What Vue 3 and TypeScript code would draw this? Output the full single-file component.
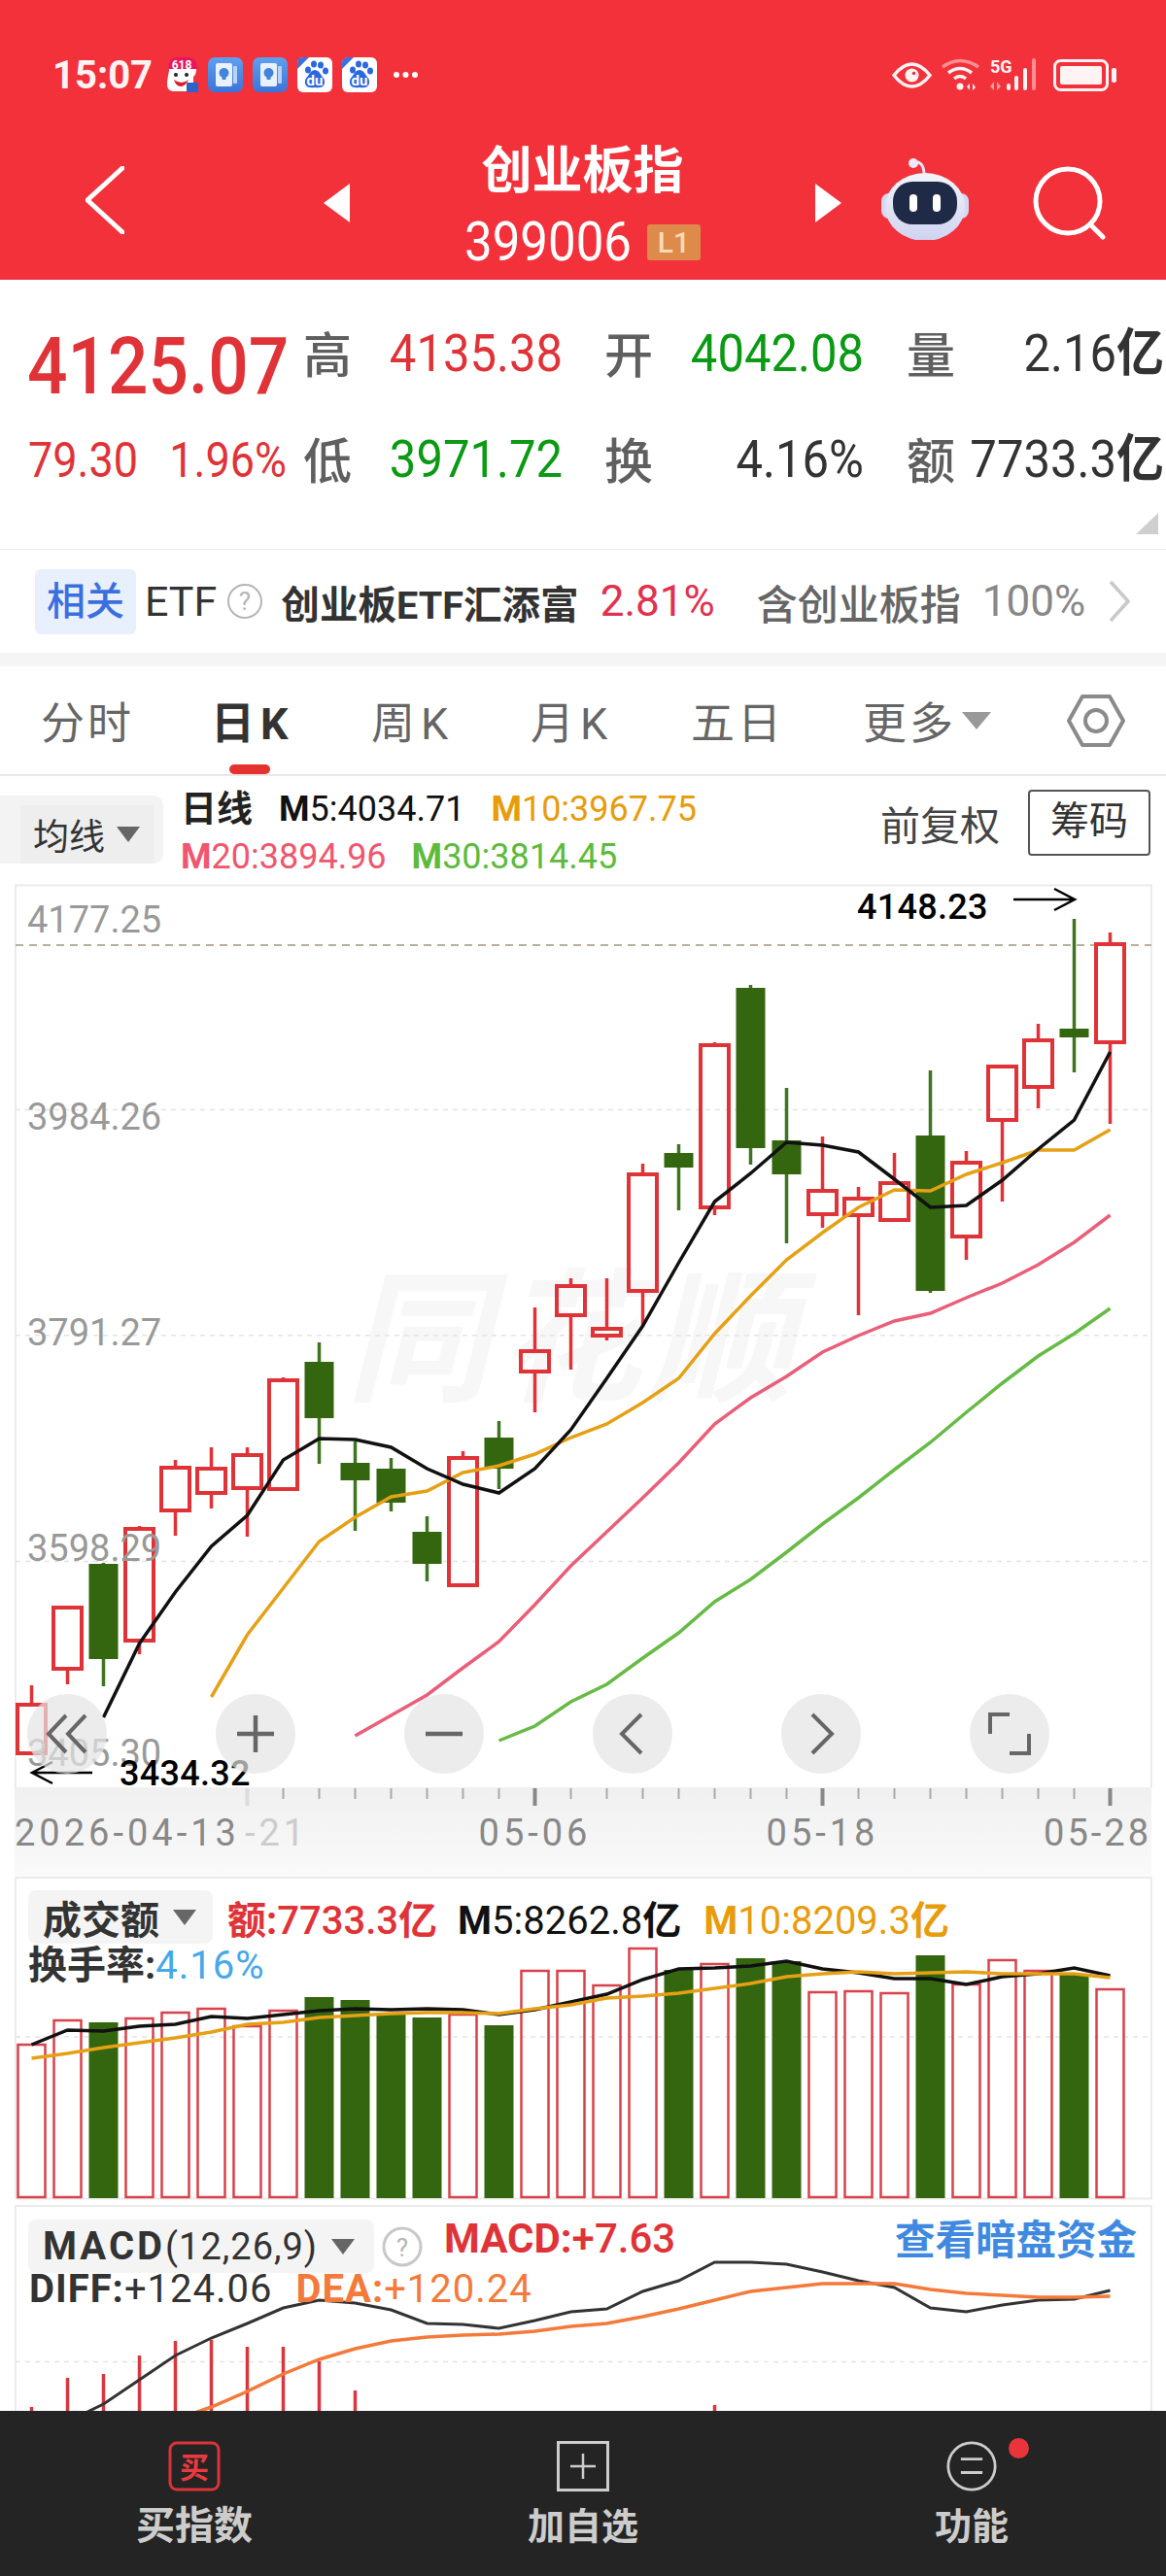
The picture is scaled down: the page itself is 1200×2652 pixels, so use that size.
<script setup lang="ts">
interface Candle {
  up: boolean
  top: number
  bot: number
  hi: number
  lo: number
}

const colX = (i: number): number => 32.5 + 37 * i

// [body top, body bottom, wick high, wick low, 1 = red]
const raw: number[][] = [
  [1754, 1804, 1734, 1804, 1], [1654, 1717, 1654, 1733, 1], [1609, 1707, 1608, 1735, 0],
  [1573, 1688, 1570, 1702, 1], [1510, 1554, 1502, 1580, 1], [1511, 1536, 1489, 1552, 1],
  [1497, 1531, 1489, 1581, 1], [1420, 1532, 1417, 1532, 1], [1401, 1459, 1381, 1506, 0],
  [1505, 1523, 1483, 1575, 0], [1511, 1546, 1500, 1555, 0], [1576, 1609, 1560, 1627, 0],
  [1500, 1631, 1493, 1631, 1], [1479, 1511, 1462, 1532, 0], [1390, 1411, 1345, 1453, 1],
  [1323, 1353, 1315, 1409, 1], [1367, 1374, 1315, 1379, 1], [1208, 1328, 1197, 1365, 1],
  [1186, 1201, 1177, 1245, 0], [1075, 1242, 1072, 1250, 1], [1016, 1181, 1013, 1198, 0],
  [1173, 1208, 1119, 1279, 0], [1225, 1249, 1169, 1263, 1], [1233, 1250, 1221, 1353, 1],
  [1217, 1255, 1186, 1257, 1], [1168, 1328, 1101, 1330, 0], [1196, 1272, 1184, 1296, 1],
  [1097, 1152, 1097, 1236, 1], [1070, 1118, 1053, 1140, 1], [1058, 1067, 945, 1103, 0],
  [971, 1072, 959, 1156, 1],
]

const candles: Candle[] = raw.map(r => ({ top: r[0], bot: r[1], hi: r[2], lo: r[3], up: r[4] === 1 }))

const pts = (start: number, ys: number[]): string =>
  ys.map((y, i) => `${colX(start + i)},${y}`).join(' ')

const ma5 = pts(2, [1767, 1691, 1638, 1591, 1559, 1502, 1480, 1481, 1489, 1511, 1527, 1536, 1511, 1471, 1418, 1364, 1299, 1236, 1207, 1175, 1178, 1185, 1213, 1242, 1240, 1214, 1182, 1152, 1082])
const ma10 = pts(5, [1746, 1682, 1634, 1586, 1561, 1540, 1534, 1515, 1508, 1496, 1479, 1465, 1443, 1418, 1372, 1333, 1296, 1268, 1242, 1224, 1225, 1208, 1196, 1183, 1183, 1162])
const ma20 = pts(9, [1786, 1765, 1744, 1716, 1689, 1651, 1611, 1576, 1541, 1505, 1465, 1438, 1416, 1391, 1374, 1359, 1351, 1335, 1320, 1301, 1278, 1250])
const ma30 = pts(13, [1791, 1776, 1751, 1733, 1706, 1680, 1648, 1625, 1597, 1568, 1541, 1512, 1484, 1453, 1423, 1395, 1372, 1346])

const volTops = [2104, 2079, 2081, 2077, 2071, 2067, 2085, 2069, 2055, 2058, 2073, 2076, 2073, 2084, 2028, 2028, 2043, 2005, 2027, 2021, 2015, 2018, 2050, 2049, 2051, 2012, 2042, 2017, 2028, 2031, 2047]
const volM5 = pts(0, [2104, 2089, 2090, 2085, 2083, 2075, 2077, 2073, 2069, 2067, 2068, 2067, 2068, 2073, 2068, 2060, 2052, 2037, 2026, 2025, 2023, 2018, 2026, 2030, 2036, 2036, 2042, 2034, 2031, 2025, 2033])
const volM10 = pts(0, [2118, 2113, 2107, 2102, 2097, 2091, 2083, 2081, 2076, 2074, 2072, 2071, 2071, 2072, 2067, 2063, 2056, 2054, 2051, 2046, 2041, 2034, 2031, 2029, 2031, 2030, 2029, 2031, 2031, 2031, 2035])

const diff = pts(1, [2492, 2474, 2449, 2424, 2406, 2391, 2375, 2367, 2370, 2377, 2391, 2392, 2396, 2388, 2379, 2376, 2358, 2347, 2328, 2328, 2330, 2338, 2347, 2354, 2375, 2379, 2372, 2367, 2366, 2357])
const dea = pts(4, [2490, 2477, 2461, 2443, 2428, 2417, 2409, 2405, 2403, 2402, 2399, 2394, 2391, 2384, 2376, 2367, 2358, 2354, 2350, 2350, 2350, 2356, 2360, 2362, 2364, 2364, 2363])
const macdTops = [2477, 2447, 2443, 2424, 2409, 2408, 2415, 2415, 2430, 2460]

const yLabels = [
  { text: '4177.25', y: 959 },
  { text: '3984.26', y: 1162 },
  { text: '3791.27', y: 1384 },
  { text: '3598.29', y: 1606 },
  { text: '3405.30', y: 1817 },
]

const gridY = [1141.5, 1373.8, 1606.5]
const majorTicks = [14, 22, 30]
const minorTicks = Array.from({ length: 24 }, (_, i) => i + 7).filter(i => !majorTicks.includes(i))

const tabs = ['分时', '日K', '周K', '月K', '五日']
</script>

<template>
  <div class="page">
    <header class="top">
      <div class="status">
        <span class="clock">15:07</span>
        <div class="notifs">
          <svg width="35" height="36" viewBox="0 0 35 36">
            <path d="M5 14Q3 3 12 1h13q8 2 8 11 0 6-3 8v10q-1 5-6 5H9q-6-1-6-7 0-5 2-14z" fill="#fff" />
            <path d="M4 13Q4 1 12 0h14q8 1 8 12H4z" fill="#e8175d" />
            <text x="18" y="12" class="n618">618</text>
            <circle cx="12" cy="18" r="2" fill="#222" /><circle cx="23" cy="18" r="2" fill="#222" />
            <path d="M10 23q8 6 15 0-3 7-8 7t-7-7z" fill="#d81e2c" />
            <rect x="23" y="26" width="12" height="10" rx="1" fill="#2c62c9" />
          </svg>
          <svg v-for="n in 2" :key="'b' + n" width="36" height="36" viewBox="0 0 36 36">
            <defs>
              <linearGradient :id="'bg' + n" x1="0" y1="0" x2="0" y2="1">
                <stop offset="0" stop-color="#5fa0ee" /><stop offset="1" stop-color="#3b74d9" />
              </linearGradient>
            </defs>
            <rect width="36" height="36" rx="7" :fill="`url(#bg${n})`" />
            <rect x="26" y="9" width="4" height="18" rx="1" fill="#b9d3f6" />
            <rect x="8" y="6" width="17" height="24" rx="2" fill="#e9f1fc" />
            <circle cx="16.5" cy="16" r="5" fill="#4483dc" />
            <rect x="14.5" y="20" width="4" height="3" fill="#4483dc" />
          </svg>
          <svg v-for="n in 2" :key="'p' + n" width="36" height="36" viewBox="0 0 36 36">
            <rect width="36" height="36" rx="6" fill="#fff" />
            <path d="M0 12V6q0-6 6-6h6z" fill="#3d70dc" />
            <g fill="#2b68e0">
              <ellipse cx="11" cy="13" rx="3" ry="3.6" /><ellipse cx="17" cy="7" rx="3" ry="3.6" />
              <ellipse cx="24" cy="8" rx="3" ry="3.6" /><ellipse cx="29" cy="14" rx="3" ry="3.6" />
              <path d="M18 13q4 0 7 6 5 5 2 10-2 3-9 2-7 1-9-2-3-5 2-10 3-6 7-6z" />
            </g>
            <text x="18" y="29" class="du">du</text>
          </svg>
          <svg class="more" width="27" height="8" viewBox="0 0 27 8">
            <circle cx="4" cy="4" r="3" fill="#fff" /><circle cx="13.5" cy="4" r="3" fill="#fff" /><circle cx="23" cy="4" r="3" fill="#fff" />
          </svg>
        </div>
        <div class="sys">
          <svg width="41" height="27" viewBox="0 0 41 27">
            <path d="M2 13.5Q11 2 20.5 2T39 13.5Q30 25 20.5 25T2 13.5z" fill="none" stroke="#fff3f3" stroke-width="3.5" />
            <circle cx="20.5" cy="13.5" r="7" fill="#fff3f3" /><circle cx="22.5" cy="11.5" r="1.8" fill="#f2313b" />
          </svg>
          <svg width="40" height="34" viewBox="0 0 40 34">
            <path d="M1 9Q19-4 38 9" fill="none" stroke="#ff8d92" stroke-width="3.5" />
            <path d="M7 15Q19 6 31 15" fill="none" stroke="#fff3f3" stroke-width="3.5" />
            <path d="M13 21Q19 16 25 21" fill="none" stroke="#fff3f3" stroke-width="3.5" />
            <circle cx="19" cy="29" r="3.5" fill="#fff3f3" />
            <path d="M29 33v-7l-3 3zM32 26v7l3-3z" fill="#fff3f3" />
          </svg>
          <svg width="55" height="34" viewBox="0 0 55 34">
            <text x="0" y="15" class="fiveg">5G</text>
            <path d="M4 33v-9l-4 5zM7 24v9l4-4z" fill="#ff9a9e" />
            <rect x="17" y="26" width="4" height="7" rx="2" fill="#fff3f3" />
            <rect x="25" y="18" width="4" height="15" rx="2" fill="#fff3f3" />
            <rect x="34" y="10" width="4" height="23" rx="2" fill="#fff3f3" />
            <rect x="43" y="0" width="4" height="33" rx="2" fill="#ff8d92" />
          </svg>
          <svg width="66" height="33" viewBox="0 0 66 33">
            <rect x="1.5" y="1.5" width="54" height="30" rx="6" fill="none" stroke="#fff3f3" stroke-width="3" />
            <rect x="7" y="7" width="43" height="19" rx="2" fill="#fff3f3" />
            <rect x="60" y="9" width="5" height="15" rx="2" fill="#fff3f3" />
          </svg>
        </div>
      </div>
      <div class="navrow">
        <svg class="nav-back" width="40" height="70" viewBox="0 0 40 70">
          <path d="M38 2L2 35l36 33" fill="none" stroke="#fff" stroke-width="5" stroke-linecap="round" stroke-linejoin="round" />
        </svg>
        <svg class="nav-tri" width="27" height="40" viewBox="0 0 27 40"><path d="M27 0v40L0 20z" fill="#fff" /></svg>
        <div class="title">
          <div class="title-name">创业板指</div>
          <div class="title-code"><span class="tall">399006</span><span class="lv">L1</span></div>
        </div>
        <svg class="nav-tri" width="27" height="40" viewBox="0 0 27 40"><path d="M0 0v40l27-20z" fill="#fff" /></svg>
        <svg class="nav-robot" width="90" height="84" viewBox="0 0 90 84">
          <defs>
            <linearGradient id="rb" x1="0" y1="0" x2="0" y2="1">
              <stop offset="0" stop-color="#f4f4fa" /><stop offset="1" stop-color="#cfd3f0" />
            </linearGradient>
          </defs>
          <path d="M33 4q10-2 11 11" fill="none" stroke="#e8e6f5" stroke-width="3" />
          <circle cx="33" cy="5" r="5" fill="#eceaf6" />
          <rect x="0" y="36" width="90" height="26" rx="8" fill="#d5d8ef" />
          <ellipse cx="45" cy="50" rx="41" ry="35" fill="url(#rb)" />
          <rect x="12" y="24" width="66" height="44" rx="20" fill="#1f2a47" />
          <rect x="29" y="37" width="8" height="18" rx="4" fill="#fff" />
          <rect x="53" y="37" width="8" height="18" rx="4" fill="#fff" />
        </svg>
        <svg class="nav-search" width="76" height="76" viewBox="0 0 76 76">
          <circle cx="36" cy="36" r="33" fill="none" stroke="#fff" stroke-width="5" />
          <path d="M60 61l12 12" stroke="#fff" stroke-width="5" stroke-linecap="round" />
        </svg>
      </div>
    </header>

    <section class="quote">
      <div class="price">4125.07</div>
      <div class="stat"><span class="lab">高</span><span class="val red">4135.38</span></div>
      <div class="stat"><span class="lab">开</span><span class="val green">4042.08</span></div>
      <div class="stat"><span class="lab">量</span><span class="val">2.16<b>亿</b></span></div>
      <div class="change"><span class="tall">79.30</span><span class="tall">1.96%</span></div>
      <div class="stat"><span class="lab">低</span><span class="val green">3971.72</span></div>
      <div class="stat"><span class="lab">换</span><span class="val">4.16%</span></div>
      <div class="stat"><span class="lab">额</span><span class="val">7733.3<b>亿</b></span></div>
      <svg class="corner" width="23" height="22" viewBox="0 0 23 22"><path d="M23 0v22H0z" fill="#cfcfcf" /></svg>
    </section>

    <section class="related">
      <span class="rel-tag">相关</span>
      <span class="rel-etf">ETF</span>
      <svg class="rel-help" width="38" height="38" viewBox="0 0 38 38">
        <circle cx="19" cy="19" r="17" fill="none" stroke="#b5b5b5" stroke-width="2" />
        <text x="19" y="28" class="helpq">?</text>
      </svg>
      <span class="rel-name">创业板ETF汇添富</span>
      <span class="rel-pct">2.81%</span>
      <span class="rel-inc">含创业板指</span>
      <span class="rel-share">100%</span>
      <svg class="rel-more" width="22" height="44" viewBox="0 0 22 44"><path d="M2 2l18 20L2 42" fill="none" stroke="#c9c9c9" stroke-width="3.5" /></svg>
    </section>

    <nav class="tabs">
      <div v-for="(t, i) in tabs" :key="t" class="tab" :class="{ on: i === 1, kt: t.includes('K') }">
        {{ t }}
        <i v-if="i === 1" class="tab-bar"></i>
      </div>
      <div class="tab tab-more">更多<i class="tri tab-tri"></i></div>
      <svg class="tab-set" width="60" height="56" viewBox="0 0 60 56">
        <path d="M16 3h28l14 25-14 25H16L2 28z" fill="none" stroke="#8a8a8a" stroke-width="4" stroke-linejoin="round" />
        <circle cx="30" cy="28" r="11" fill="none" stroke="#8a8a8a" stroke-width="4" />
      </svg>
    </nav>

    <section class="legend">
      <div class="pick"><div class="pick-in">均线<i class="tri"></i></div></div>
      <div class="legend-rows">
        <div class="lrow">
          <span class="lname">日线</span>
          <span class="k-black"><b>M</b>5:4034.71</span>
          <span class="k-orange"><b>M</b>10:3967.75</span>
        </div>
        <div class="lrow lrow2">
          <span class="k-pink"><b>M</b>20:3894.96</span>
          <span class="k-green"><b>M</b>30:3814.45</span>
        </div>
      </div>
      <span class="fq">前复权</span>
      <span class="chip">筹码</span>
    </section>

    <section class="main-chart">
      <svg class="chart" width="1200" height="930" viewBox="0 909 1200 930">
        <text x="356" y="1430" class="mark">同花顺</text>
        <path d="M16 1839V910.5H1185V1839" fill="none" stroke="#ebebeb" stroke-width="2" />
        <line v-for="y in gridY" :key="y" x1="16" x2="1185" :y1="y" :y2="y" stroke="#e4e4e4" stroke-width="1.5" stroke-dasharray="5 5" />
        <line x1="16" x2="1185" y1="972" y2="972" stroke="#b9b09a" stroke-width="2" stroke-dasharray="8 6" />
        <g v-for="(c, i) in candles" :key="i">
          <template v-if="c.up">
            <line :x1="colX(i)" :x2="colX(i)" :y1="c.hi" :y2="c.top" stroke="#e03338" stroke-width="3.5" />
            <line :x1="colX(i)" :x2="colX(i)" :y1="c.bot" :y2="c.lo" stroke="#e03338" stroke-width="3.5" />
            <rect :x="colX(i) - 14.5" :y="c.top" width="29" :height="c.bot - c.top" fill="none" stroke="#e03338" stroke-width="4" />
          </template>
          <template v-else>
            <line :x1="colX(i)" :x2="colX(i)" :y1="c.hi" :y2="c.lo" stroke="#3f7420" stroke-width="3.5" />
            <rect :x="colX(i) - 15" :y="c.top" width="30" :height="c.bot - c.top" fill="#33660f" />
          </template>
        </g>
        <polyline :points="ma30" fill="none" stroke="#66bb44" stroke-width="3.5" />
        <polyline :points="ma20" fill="none" stroke="#ea5e78" stroke-width="3.5" />
        <polyline :points="ma10" fill="none" stroke="#e6a015" stroke-width="3.5" />
        <polyline :points="ma5" fill="none" stroke="#111" stroke-width="3.5" />
        <text v-for="l in yLabels" :key="l.text" x="28" :y="l.y" class="ylabel">{{ l.text }}</text>
        <text x="882" y="945" class="note">4148.23</text>
        <path d="M1043 925h63m-21-11l21 11-21 11" fill="none" stroke="#000" stroke-width="2.5" />
        <text x="123" y="1837" class="note">3434.32</text>
        <path d="M95 1824H33m21-11l-21 11 21 11" fill="none" stroke="#000" stroke-width="2.5" />
      </svg>
      <div class="tools">
        <button class="tool">
          <svg width="44" height="44" viewBox="0 0 44 44"><path d="M21 3L3 22l18 19M41 3L23 22l18 19" fill="none" stroke="#666" stroke-width="4" /></svg>
        </button>
        <button class="tool">
          <svg width="44" height="44" viewBox="0 0 44 44"><path d="M22 3v38M3 22h38" fill="none" stroke="#666" stroke-width="4.5" /></svg>
        </button>
        <button class="tool">
          <svg width="44" height="44" viewBox="0 0 44 44"><path d="M3 22h38" fill="none" stroke="#666" stroke-width="4.5" /></svg>
        </button>
        <button class="tool">
          <svg width="44" height="44" viewBox="0 0 44 44"><path d="M31 2L11 22l20 20" fill="none" stroke="#666" stroke-width="4" /></svg>
        </button>
        <button class="tool">
          <svg width="44" height="44" viewBox="0 0 44 44"><path d="M13 2l20 20-20 20" fill="none" stroke="#666" stroke-width="4" /></svg>
        </button>
        <button class="tool">
          <svg width="44" height="44" viewBox="0 0 44 44"><path d="M2 22V2h20M42 22v20H22" fill="none" stroke="#666" stroke-width="4" /></svg>
        </button>
      </div>
    </section>

    <section class="axis">
      <svg class="chart" width="1200" height="92" viewBox="0 1839 1200 92">
        <line :x1="colX(6)" :x2="colX(6)" y1="1840" y2="1858" stroke="#dcdcdc" stroke-width="4" />
        <line v-for="i in minorTicks" :key="i" :x1="colX(i)" :x2="colX(i)" y1="1840" y2="1851" stroke="#aaa" stroke-width="2" />
        <line v-for="i in majorTicks" :key="i" :x1="colX(i)" :x2="colX(i)" y1="1840" y2="1858" stroke="#888" stroke-width="4" />
        <text x="15" y="1899" class="xlabel">2026-04-13</text>
        <text x="252" y="1899" class="xlabel faint">-21</text>
        <text :x="colX(14)" y="1899" class="xlabel mid">05-06</text>
        <text :x="colX(22)" y="1899" class="xlabel mid">05-18</text>
        <text x="1185" y="1899" class="xlabel end">05-28</text>
      </svg>
    </section>

    <section class="sub vol">
      <svg class="chart" width="1200" height="338" viewBox="0 1931 1200 338">
        <path d="M16 2263V1932H1185V2263" fill="none" stroke="#ebebeb" stroke-width="2" />
        <line x1="16" x2="1185" y1="2096" y2="2096" stroke="#e4e4e4" stroke-width="1.5" stroke-dasharray="5 5" />
        <line x1="16" x2="1185" y1="2262.5" y2="2262.5" stroke="#ebebeb" stroke-width="2" />
        <template v-for="(top, i) in volTops" :key="i">
          <rect v-if="candles[i].up" :x="colX(i) - 14" :y="top" width="28" :height="2261 - top" fill="none" stroke="#d9414b" stroke-width="2.5" />
          <rect v-else :x="colX(i) - 15" :y="top" width="30" :height="2262 - top" fill="#33660f" />
        </template>
        <polyline :points="volM5" fill="none" stroke="#111" stroke-width="3.5" />
        <polyline :points="volM10" fill="none" stroke="#e6a015" stroke-width="3.5" />
      </svg>
      <div class="sub-legend">
        <div class="srow">
          <div class="pick-sm">成交额<i class="tri"></i></div>
          <span class="s-red"><b>额:</b>7733.3<b>亿</b></span>
          <span class="s-black"><b>M</b>5:8262.8<b>亿</b></span>
          <span class="s-orange"><b>M</b>10:8209.3<b>亿</b></span>
        </div>
        <div class="srow2"><b>换手率:</b><span class="s-blue">4.16%</span></div>
      </div>
    </section>

    <section class="sub macd">
      <svg class="chart" width="1200" height="214" viewBox="0 2269 1200 214">
        <path d="M16 2483V2270H1185V2483" fill="none" stroke="#ebebeb" stroke-width="2" />
        <line x1="16" x2="1185" y1="2430.5" y2="2430.5" stroke="#e4e4e4" stroke-width="1.5" stroke-dasharray="5 5" />
        <line v-for="(top, i) in macdTops" :key="i" :x1="colX(i)" :x2="colX(i)" :y1="top" y2="2483" stroke="#d9363e" stroke-width="3.5" />
        <line :x1="colX(19)" :x2="colX(19)" y1="2475" y2="2483" stroke="#d9363e" stroke-width="3.5" />
        <polyline :points="diff" fill="none" stroke="#333" stroke-width="3" />
        <polyline :points="dea" fill="none" stroke="#f47a3b" stroke-width="3.5" />
      </svg>
      <div class="sub-legend macd-legend">
        <div class="srow">
          <div class="pick-sm pick-macd"><b>MACD</b><span class="macd-args">(12,26,9)</span><i class="tri"></i></div>
          <svg class="macd-help" width="42" height="42" viewBox="0 0 42 42">
            <circle cx="21" cy="21" r="19" fill="none" stroke="#c8c8c8" stroke-width="3" />
            <text x="21" y="31" class="helpq">?</text>
          </svg>
          <span class="s-red"><b>MACD:</b>+7.63</span>
          <span class="dark-link">查看暗盘资金</span>
        </div>
        <div class="srow2 macd-row2">
          <span class="d-dark"><b>DIFF:</b>+124.06</span>
          <span class="d-orange"><b>DEA:</b>+120.24</span>
        </div>
      </div>
    </section>

    <footer class="bar">
      <div class="bar-item">
        <svg width="54" height="52" viewBox="0 0 54 52">
          <rect x="2" y="2" width="50" height="48" rx="7" fill="none" stroke="#d8343a" stroke-width="3" />
          <text x="27" y="38" class="buy">买</text>
        </svg>
        <span>买指数</span>
      </div>
      <div class="bar-item small">
        <svg width="54" height="52" viewBox="0 0 54 52">
          <rect x="1.5" y="1.5" width="51" height="49" fill="none" stroke="#ccc" stroke-width="3" />
          <path d="M27 13v26M14 26h26" stroke="#ccc" stroke-width="2.5" />
        </svg>
        <span>加自选</span>
      </div>
      <div class="bar-item small">
        <svg width="56" height="52" viewBox="0 0 56 56" class="fn-icon">
          <circle cx="28" cy="28" r="26" fill="none" stroke="#ccc" stroke-width="3" />
          <path d="M16 20h24M16 35h24" stroke="#ccc" stroke-width="3" />
        </svg>
        <i class="dot"></i>
        <span>功能</span>
      </div>
    </footer>
  </div>
</template>

<style>
html, body {
  margin: 0;
  background: #fff;
}
</style>

<style scoped>
.page {
  position: relative;
  width: 1200px;
  height: 2652px;
  overflow: hidden;
  background: #fff;
  font-family: Roboto, "Noto Sans CJK SC", sans-serif;
  color: #333;
}
b { font-weight: 700; }
.chart { display: block; }
.tall {
  display: inline-block;
  transform: scaleY(1.1);
}

.top {
  height: 288px;
  background: #f2313b;
  color: #fff;
}
.status {
  display: flex;
  align-items: center;
  height: 126px;
  padding: 14px 50px 0 54px;
}
.clock {
  width: 115px;
  font-size: 40px;
  font-weight: 700;
  color: #fff3f3;
}
.notifs {
  display: flex;
  align-items: center;
  gap: 10px;
}
.more { margin-left: 6px; }
.n618 { font: 700 12px Roboto, sans-serif; fill: #fff; text-anchor: middle; }
.du { font: 700 15px Roboto, sans-serif; fill: #fff; text-anchor: middle; }
.sys {
  display: flex;
  align-items: center;
  gap: 10px;
  margin-left: auto;
}
.fiveg { font: 700 18px Roboto, sans-serif; fill: #fff3f3; }
.navrow {
  display: flex;
  align-items: flex-start;
  height: 148px;
  padding-left: 88px;
}
.nav-back { margin-top: 31px; margin-right: 205px; }
.nav-tri { margin-top: 49px; }
.title {
  width: 479px;
  text-align: center;
  margin-top: 7px;
}
.title-name {
  font-size: 52px;
  font-weight: 700;
  line-height: 60px;
}
.title-code {
  display: flex;
  align-items: center;
  justify-content: center;
  gap: 16px;
  margin-top: 17px;
  font-size: 51px;
  line-height: 50px;
}
.lv {
  width: 55px;
  height: 37px;
  border-radius: 3px;
  background: #de8a4a;
  color: #f8dcb8;
  font-size: 30px;
  font-weight: 500;
  line-height: 37px;
}
.nav-robot { margin: 23px 0 0 41px; }
.nav-search { margin: 31px 0 0 66px; }

.quote {
  position: relative;
  display: grid;
  grid-template-columns: 283px 310px 311px 265px;
  grid-template-rows: 109px 109px;
  height: 278px;
  padding: 22px 0 0 29px;
  box-sizing: border-box;
  border-bottom: 1px solid #e9e9e9;
  align-items: center;
}
.price {
  font-size: 73px;
  font-weight: 500;
  line-height: 74px;
  color: #e03338;
  margin-top: 25px;
  margin-left: -1px;
  white-space: nowrap;
  transform: scaleY(1.12);
}
.change {
  display: flex;
  justify-content: space-between;
  width: 266px;
  font-size: 45px;
  color: #e03338;
}
.stat {
  display: flex;
  justify-content: space-between;
  align-items: center;
  width: 267px;
}
.stat:nth-child(4),
.stat:nth-child(8) { width: 265px; }
.lab {
  margin-top: -5px;
  font-size: 50px;
  font-weight: 500;
  color: #5f5f5f;
}
.val {
  display: inline-block;
  font-size: 49px;
  line-height: 56px;
  color: #333;
  white-space: nowrap;
  transform: scaleY(1.08);
}
.val b {
  font-size: 49px;
  line-height: 0;
}
.val.red { color: #e03338; }
.val.green { color: #0a9a14; }
.corner {
  position: absolute;
  right: 8px;
  bottom: 15px;
}

.related {
  display: flex;
  align-items: center;
  height: 106px;
  padding-left: 36px;
  border-bottom: 14px solid #f5f5f5;
  white-space: nowrap;
}
.rel-tag {
  width: 104px;
  height: 67px;
  border-radius: 6px;
  background: #e8f0fd;
  color: #3a6fe0;
  font-size: 40px;
  font-weight: 500;
  line-height: 67px;
  text-align: center;
}
.rel-etf {
  margin-left: 9px;
  font-size: 43px;
  color: #333;
}
.rel-help { margin-left: 10px; }
.helpq { font: 400 26px Roboto, sans-serif; fill: #b5b5b5; text-anchor: middle; }
.rel-name {
  margin-left: 18px;
  font-size: 39.6px;
  font-weight: 700;
  color: #333;
}
.rel-pct {
  margin-left: 22px;
  font-size: 44px;
  color: #e0324f;
}
.rel-inc {
  margin-left: 43px;
  font-size: 42px;
  font-weight: 500;
  color: #666;
}
.rel-share {
  margin-left: 22px;
  font-size: 44px;
  color: #888;
}
.rel-more { margin-left: 24px; }

.tabs {
  display: grid;
  grid-template-columns: 178px 165px 164px 162px 177px 210px 60px;
  align-items: center;
  height: 111px;
  padding-left: 42px;
  border-bottom: 2px solid #e8e8e8;
}
.tab {
  position: relative;
  font-size: 45px;
  letter-spacing: 3px;
  color: #666;
  white-space: nowrap;
}
.tab.kt {
  margin-left: -3px;
  letter-spacing: 6px;
}
.tab.on {
  font-weight: 700;
  color: #333;
}
.tab-bar {
  position: absolute;
  left: 19px;
  bottom: -23px;
  width: 42px;
  height: 10px;
  border-radius: 5px;
  background: #e5322f;
}
.tab-more {
  display: flex;
  align-items: center;
}
.tri {
  display: inline-block;
  width: 0;
  height: 0;
  border-left: 12px solid transparent;
  border-right: 12px solid transparent;
  border-top: 16px solid #666;
}
.tab-tri {
  margin-left: 6px;
  border-top-color: #999;
  border-left-width: 15px;
  border-right-width: 15px;
  border-top-width: 18px;
}

.legend {
  display: flex;
  align-items: flex-start;
  height: 111px;
  white-space: nowrap;
}
.pick {
  width: 168px;
  height: 70px;
  margin-top: 20px;
  border-radius: 0 10px 10px 0;
  background: #f3f3f3;
  box-sizing: border-box;
  padding: 10px 10px 0 21px;
}
.pick-in {
  display: flex;
  align-items: center;
  height: 60px;
  padding-left: 13px;
  background: #eee;
  font-size: 37px;
  color: #333;
}
.pick-in .tri { margin-left: 12px; }
.legend-rows {
  width: 700px;
  margin-left: 18px;
  padding-top: 10px;
  font-size: 36px;
  line-height: 49px;
}
.lrow {
  display: flex;
  gap: 27px;
}
.lrow2 {
  gap: 26px;
}
.lname {
  width: 74px;
  font-size: 37px;
  font-weight: 700;
  color: #222;
}
.k-black { color: #111; }
.k-orange { color: #e89c0c; }
.k-pink { color: #f0566f; }
.k-green { color: #5cbb3c; }
.fq {
  margin: 26px 0 0 20px;
  font-size: 41px;
  line-height: 52px;
  color: #444;
}
.chip {
  width: 122px;
  height: 64px;
  margin: 14px 0 0 29px;
  border: 2px solid #555;
  border-radius: 4px;
  font-size: 40px;
  line-height: 62px;
  text-align: center;
  color: #333;
}

.main-chart {
  position: relative;
}
.mark {
  font: italic 700 148px "Noto Sans CJK SC", sans-serif;
  letter-spacing: 8px;
  fill: #f7f7f7;
}
.ylabel {
  font: 400 38px Roboto, sans-serif;
  fill: #999;
}
.note {
  font: 500 36px Roboto, sans-serif;
  letter-spacing: 0.3px;
  fill: #000;
}
.tools {
  position: absolute;
  left: 28px;
  top: 834px;
  display: flex;
  gap: 112px;
}
.tool {
  display: flex;
  align-items: center;
  justify-content: center;
  width: 82px;
  height: 82px;
  padding: 0;
  border: 0;
  border-radius: 50%;
  background: rgba(228, 228, 228, 0.7);
}

.axis {
  background: linear-gradient(#f0f0f0, #fafafa);
  width: 1170px;
  margin-left: 15px;
}
.axis .chart { margin-left: -15px; }
.xlabel {
  font: 400 38px Roboto, sans-serif;
  letter-spacing: 4px;
  fill: #888;
}
.xlabel.faint { fill: #ccc; }
.xlabel.mid { text-anchor: middle; }
.xlabel.end { text-anchor: end; letter-spacing: 3px; }

.sub {
  position: relative;
}
.sub-legend {
  position: absolute;
  left: 29px;
  top: 14px;
  white-space: nowrap;
}
.srow {
  display: flex;
  align-items: center;
  font-size: 40px;
  height: 55px;
}
.pick-sm {
  display: flex;
  align-items: center;
  width: 190px;
  height: 55px;
  box-sizing: border-box;
  padding-left: 15px;
  border-radius: 8px;
  background: rgba(243, 243, 243, 0.95);
  font-size: 40px;
  font-weight: 700;
  color: #333;
}
.pick-sm .tri { margin-left: 14px; }
.s-red {
  margin-left: 15px;
  color: #e03338;
  font-weight: 500;
}
.s-red b { font-weight: 700; }
.s-black {
  margin-left: 21px;
  color: #111;
}
.s-orange {
  margin-left: 23px;
  color: #e89c0c;
}
.srow2 {
  font-size: 40px;
  line-height: 46px;
  color: #333;
}
.s-blue { color: #45a8ea; font-size: 40px; letter-spacing: 1px; }
.macd-legend { top: 15px; }
.pick-macd {
  width: 356px;
  font-size: 38px;
  font-weight: 400;
}
.pick-macd b { font-size: 40px; letter-spacing: 3px; }
.macd-args { letter-spacing: 1px; }
.macd-help { margin-left: 8px; }
.macd-legend .s-red { margin-left: 22px; font-size: 42px; margin-top: -16px; }
.dark-link {
  position: absolute;
  left: 892px;
  top: -12px;
  font-size: 41.5px;
  font-weight: 700;
  color: #3f8ae0;
}
.macd-row2 {
  display: flex;
  gap: 24px;
  margin-top: -6px;
  margin-left: 1px;
  font-size: 40px;
  letter-spacing: 1px;
}
.d-dark { color: #333; }
.d-orange { color: #f47a3b; }

.bar {
  position: absolute;
  left: 0;
  right: 0;
  bottom: 0;
  display: grid;
  grid-template-columns: repeat(3, 400px);
  height: 170px;
  background: #242424;
}
.bar-item {
  position: relative;
  display: flex;
  flex-direction: column;
  align-items: center;
  padding-top: 31px;
  font-size: 40px;
  font-weight: 700;
  color: #ccc;
  line-height: 60px;
}
.bar-item.small { font-size: 38px; }
.bar-item svg { margin-bottom: 6px; }
.buy {
  font: 700 30px "Noto Sans CJK SC", sans-serif;
  fill: #ea3a40;
  text-anchor: middle;
}
.dot {
  position: absolute;
  left: 238px;
  top: 28px;
  width: 21px;
  height: 21px;
  border-radius: 50%;
  background: #e8343a;
}
</style>
